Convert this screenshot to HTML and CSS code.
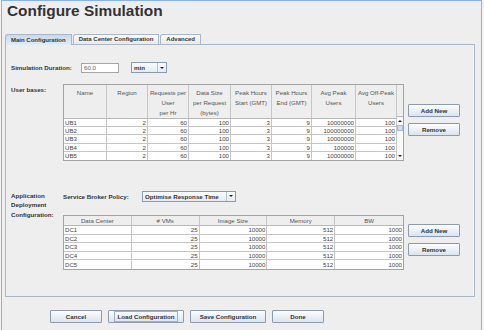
FILE: index.html
```html
<!DOCTYPE html>
<html lang="en">
<head>
    <meta charset="UTF-8">
    <meta name="viewport" content="width=device-width, initial-scale=1.0">
    <title>Configure Simulation</title>
    <link rel="stylesheet" href="styles.css">
</head>
<body>

<div class="window">
    <h1 class="title">Configure Simulation</h1>

    <div class="tabs">
        <div class="tab active">Main Configuration</div>
        <div class="tab">Data Center Configuration</div>
        <div class="tab">Advanced</div>
    </div>

    <div class="panel">
        <!-- Simulation duration -->
        <div class="duration-row">
            <label class="field-label duration-label" for="duration">Simulation Duration:</label>
            <input id="duration" class="text-field" type="text" value="60.0">
            <div class="combo combo-unit">
                <span class="combo-text">min</span>
                <span class="combo-btn"><i class="arrow-down"></i></span>
            </div>
        </div>

        <!-- User bases -->
        <div class="section section-users">
            <div class="field-label">User bases:</div>
            <div class="grid-box">
                <table class="data-table ub-table">
                    <thead>
                        <tr>
                            <th>Name</th>
                            <th>Region</th>
                            <th>Requests per<br>User<br>per Hr</th>
                            <th>Data Size<br>per Request<br>(bytes)</th>
                            <th>Peak Hours<br>Start (GMT)</th>
                            <th>Peak Hours<br>End (GMT)</th>
                            <th>Avg Peak<br>Users</th>
                            <th>Avg Off-Peak<br>Users</th>
                        </tr>
                    </thead>
                    <tbody>
                        <tr><td>UB1</td><td class="num">2</td><td class="num">60</td><td class="num">100</td><td class="num">3</td><td class="num">9</td><td class="num">10000000</td><td class="num">100</td></tr>
                        <tr><td>UB2</td><td class="num">2</td><td class="num">60</td><td class="num">100</td><td class="num">3</td><td class="num">9</td><td class="num">100000000</td><td class="num">100</td></tr>
                        <tr><td>UB3</td><td class="num">2</td><td class="num">60</td><td class="num">100</td><td class="num">3</td><td class="num">9</td><td class="num">10000000</td><td class="num">100</td></tr>
                        <tr><td>UB4</td><td class="num">2</td><td class="num">60</td><td class="num">100</td><td class="num">3</td><td class="num">9</td><td class="num">100000</td><td class="num">100</td></tr>
                        <tr><td>UB5</td><td class="num">2</td><td class="num">60</td><td class="num">100</td><td class="num">3</td><td class="num">9</td><td class="num">10000000</td><td class="num">100</td></tr>
                    </tbody>
                </table>
                <div class="scrollbar">
                    <div class="scroll-corner"></div>
                    <div class="scroll-track">
                        <span class="scroll-arrow"><i class="arrow-up"></i></span>
                        <span class="scroll-thumb"></span>
                        <span class="scroll-arrow"><i class="arrow-down"></i></span>
                    </div>
                </div>
            </div>
            <div class="side-buttons side-users">
                <button class="btn">Add New</button>
                <button class="btn">Remove</button>
            </div>
        </div>

        <!-- Application deployment -->
        <div class="section section-deploy">
            <div class="field-label deploy-label">Application Deployment Configuration:</div>
            <div class="deploy-main">
                <div class="policy-row">
                    <span class="field-label policy-label">Service Broker Policy:</span>
                    <div class="combo combo-policy">
                        <span class="combo-text">Optimise Response Time</span>
                        <span class="combo-btn"><i class="arrow-down"></i></span>
                    </div>
                </div>
                <div class="grid-box">
                    <table class="data-table dc-table">
                        <thead>
                            <tr>
                                <th>Data Center</th>
                                <th># VMs</th>
                                <th>Image Size</th>
                                <th>Memory</th>
                                <th>BW</th>
                            </tr>
                        </thead>
                        <tbody>
                            <tr><td>DC1</td><td class="num">25</td><td class="num">10000</td><td class="num">512</td><td class="num">1000</td></tr>
                            <tr><td>DC2</td><td class="num">25</td><td class="num">10000</td><td class="num">512</td><td class="num">1000</td></tr>
                            <tr><td>DC3</td><td class="num">25</td><td class="num">10000</td><td class="num">512</td><td class="num">1000</td></tr>
                            <tr><td>DC4</td><td class="num">25</td><td class="num">10000</td><td class="num">512</td><td class="num">1000</td></tr>
                            <tr><td>DC5</td><td class="num">25</td><td class="num">10000</td><td class="num">512</td><td class="num">1000</td></tr>
                        </tbody>
                    </table>
                </div>
            </div>
            <div class="side-buttons side-deploy">
                <button class="btn">Add New</button>
                <button class="btn">Remove</button>
            </div>
        </div>
    </div>

    <!-- Bottom actions -->
    <div class="actions">
        <button class="btn btn-cancel">Cancel</button>
        <button class="btn btn-load"><span class="focus-ring">Load Configuration</span></button>
        <button class="btn btn-save">Save Configuration</button>
        <button class="btn btn-done">Done</button>
    </div>
</div>

</body>
</html>
```

FILE: styles.css
```css
* {
    box-sizing: border-box;
}
body {
    margin: 0;
    padding: 0;
    background-color: #f3f3f3;
    font-family: "Liberation Sans", Arial, sans-serif;
    color: #333;
}
.window {
    margin-left: 1px;
    width: 481px;
    height: 330px;
    background-color: #eeeeee;
    border: 1px solid #8db3dc;
    border-bottom: none;
}
.title {
    margin: 0;
    padding: 1px 0 0 5px;
    height: 18px;
    font-size: 15.4px;
    line-height: 17px;
    font-weight: bold;
    color: #333;
}

/* Tabs */
.tabs {
    display: flex;
    align-items: flex-end;
    gap: 1px;
    margin: 15px 0 0 3px;
    height: 10px;
}
.tab {
    height: 10px;
    padding: 0 5px;
    font-size: 6px;
    font-weight: bold;
    line-height: 9px;
    color: #333;
    border: 1px solid #a9b7c6;
    border-bottom: none;
    border-top-left-radius: 3px;
    background: linear-gradient(#fbfbfb, #e9e9e9);
}
.tab.active {
    position: relative;
    z-index: 1;
    height: 11px;
    margin-bottom: -1px;
    line-height: 10px;
    background: linear-gradient(#c6daef, #e2ecf6);
}

/* Panel */
.panel {
    margin-left: 3px;
    width: 470px;
    height: 253px;
    padding: 17px 0 0 5px;
    border: 1px solid #a9b7c6;
    box-shadow: inset -1px 0 0 #fafafa;
}
.field-label {
    font-size: 6.2px;
    font-weight: bold;
    color: #333;
    line-height: 9px;
}
.duration-row {
    display: flex;
    align-items: center;
    height: 11px;
}
.duration-label {
    width: 70px;
}
.text-field {
    width: 38px;
    height: 10px;
    margin: 0 12px 0 0;
    padding: 0 2px;
    font-family: "Liberation Sans", Arial, sans-serif;
    font-size: 6.2px;
    color: #666;
    background-color: #fff;
    border: 1px solid #a6a6a6;
    outline: none;
}

/* Combo boxes */
.combo {
    display: flex;
    height: 11px;
    border: 1px solid #8c9bab;
    background: linear-gradient(#fafbfc, #e6ebf0);
}
.combo-text {
    flex: 1;
    padding-left: 2px;
    font-size: 6.2px;
    font-weight: bold;
    line-height: 9px;
    color: #333;
    white-space: nowrap;
}
.combo-btn {
    width: 9px;
    display: flex;
    align-items: center;
    justify-content: center;
    border-left: 1px solid #b4c0cc;
}
.combo-unit {
    width: 36px;
}
.combo-policy {
    width: 94px;
}
.arrow-down {
    display: block;
    width: 0;
    height: 0;
    border-left: 2px solid transparent;
    border-right: 2px solid transparent;
    border-top: 2px solid #222;
}
.arrow-up {
    display: block;
    width: 0;
    height: 0;
    border-left: 2px solid transparent;
    border-right: 2px solid transparent;
    border-bottom: 2px solid #222;
}

/* Sections */
.section {
    display: grid;
    grid-template-columns: 52px 341px 56px;
    align-items: start;
}
.section-users {
    margin-top: 11px;
}
.section-users > .field-label {
    padding-top: 1px;
}
.section-deploy {
    margin-top: 30px;
}
.deploy-label {
    line-height: 9.5px;
}
.side-buttons {
    display: flex;
    flex-direction: column;
    gap: 6px;
    padding-left: 4px;
}
.side-users {
    padding-top: 20px;
}
.side-deploy {
    padding-top: 33px;
}
.policy-row {
    display: flex;
    align-items: center;
    height: 11px;
    margin-bottom: 13px;
}
.policy-label {
    width: 79px;
}

/* Tables */
.grid-box {
    display: flex;
    width: 341px;
    border: 1px solid #a3a3a3;
    background-color: #fff;
}
.data-table {
    table-layout: fixed;
    border-collapse: separate;
    border-spacing: 0;
    font-size: 6.1px;
    color: #444;
}
.data-table th {
    padding: 0;
    font-weight: normal;
    color: #555;
    text-align: center;
    background-color: #eeeeee;
    border-right: 1px solid #c6c6c6;
    border-bottom: 1px solid #b8b8b8;
}
.data-table td {
    padding: 0 1px;
    line-height: 7px;
    white-space: nowrap;
    background-color: #fff;
    border-right: 1px solid #c6c6c6;
    border-bottom: 1px solid #c6c6c6;
}
.data-table tbody tr:last-child td {
    border-bottom: none;
}
.data-table .num {
    text-align: right;
}
.ub-table {
    width: 333px;
}
.ub-table thead tr {
    height: 32px;
}
.ub-table th {
    vertical-align: top;
    padding-top: 3px;
    line-height: 10px;
}
.ub-table tbody tr {
    height: 8.2px;
}
.ub-table th:nth-child(1) { width: 43px; }
.ub-table th:nth-child(2) { width: 41px; }
.ub-table th:nth-child(3) { width: 41px; }
.ub-table th:nth-child(4) { width: 42px; }
.ub-table th:nth-child(5) { width: 41px; }
.ub-table th:nth-child(6) { width: 40px; }
.ub-table th:nth-child(7) { width: 44px; }
.ub-table th:nth-child(8) { width: 41px; }

.dc-table {
    width: 339px;
}
.dc-table thead tr {
    height: 10px;
}
.dc-table th {
    line-height: 9px;
}
.dc-table th:last-child,
.dc-table td:last-child {
    border-right: none;
}
.dc-table tbody tr {
    height: 8.6px;
}

/* Scrollbar */
.scrollbar {
    width: 6px;
    display: flex;
    flex-direction: column;
}
.scroll-corner {
    height: 32px;
    background-color: #eeeeee;
    border-bottom: 1px solid #b8b8b8;
}
.scroll-track {
    flex: 1;
    display: flex;
    flex-direction: column;
    justify-content: space-between;
    background-color: #fafafa;
}
.scroll-arrow {
    height: 8px;
    display: flex;
    align-items: center;
    justify-content: center;
}
.scroll-thumb {
    height: 6px;
    margin: 0 0 auto 0;
    background-color: #cfdff0;
    border: 1px solid #a6bcd4;
}

/* Buttons */
.btn {
    height: 13px;
    width: 52px;
    padding: 0;
    font-family: "Liberation Sans", Arial, sans-serif;
    font-size: 6.2px;
    font-weight: bold;
    color: #333;
    border: 1px solid #8d9cad;
    border-radius: 1px;
    background: linear-gradient(#fcfdfe, #dbe4ee);
    cursor: pointer;
}
.actions {
    display: flex;
    gap: 6px;
    margin-top: 13px;
    padding-left: 48px;
}
.btn-load,
.btn-save {
    width: 76px;
}
.focus-ring {
    padding: 1px 2px;
    border: 1px solid #9fb0c4;
}
```
